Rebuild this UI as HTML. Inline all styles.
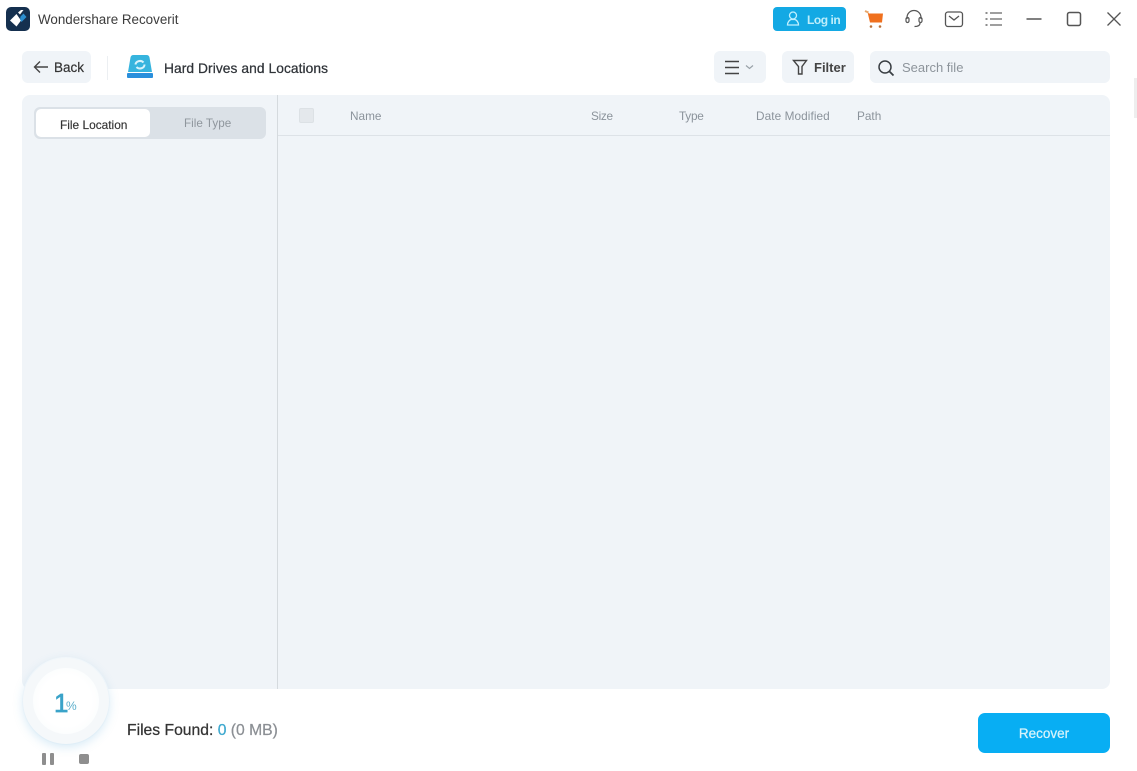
<!DOCTYPE html>
<html><head><meta charset="utf-8">
<style>
html,body{margin:0;padding:0;background:#fff}
#p{position:relative;width:1137px;height:771px;overflow:hidden;background:#fff;font-family:"Liberation Sans",sans-serif;color:#333}
#p div,#p svg{position:absolute}
.t{white-space:nowrap;line-height:16px}
.h{font-size:11.800px;color:#8b939b;top:107.500px}
.b{background:#f0f4f8;border-radius:6px}
</style></head><body><div id="p">
<svg style="left:6px;top:7px" width="24" height="24" viewBox="0 0 24 24"><rect width="24" height="24" rx="5" fill="#15304f"/><path d="M4 13.500L10.500 7l4.500 6.500-4.500 6z" fill="#fff"/><path d="M12 5.500L15 3h2.500l-3.500 4.500z" fill="#fff"/><path d="M14.500 9.500l3-3 3 3.500-5 5-1.500-2.500z" fill="#2c8fd0"/></svg>
<div class="t" style="left:38px;top:12px;font-size:13.400px;color:#3c3c3c">Wondershare Recoverit</div>

<div style="left:773px;top:7px;width:73px;height:24px;background:#13a9e4;border-radius:4px"></div>
<svg style="left:785px;top:10px" width="16" height="16" viewBox="0 0 16 16" fill="none" stroke="#bff0ff" stroke-width="1.300"><circle cx="8" cy="5.500" r="3.500"/><path d="M2.500 15c0-3 2-5 3.500-5.500h4c1.500.5 3.500 2.500 3.500 5.500z"/></svg>
<div class="t" style="left:807px;top:12px;font-size:12px;font-weight:bold;color:#bdeefb;letter-spacing:-.45px">Log in</div>

<svg style="left:864px;top:9px" width="20" height="20" viewBox="0 0 20 20"><path d="M3.500 3L6 13.500h12l1-9H5z" fill="#f0701e"/><path d="M1 2l3.500 1.500" stroke="#e9a66a" stroke-width="2" fill="none"/><circle cx="7" cy="17.500" r="1.300" fill="#b8703a"/><circle cx="16" cy="17.500" r="1.300" fill="#b8703a"/></svg>
<svg style="left:904px;top:9px" width="20" height="20" viewBox="0 0 20 20" fill="none" stroke="#555" stroke-width="1.200"><path d="M3 10V8.500a7 7 0 0 1 14 0V10"/><rect x="2" y="8.500" width="3" height="5" rx="1.500"/><rect x="15" y="8.500" width="3" height="5" rx="1.500"/><path d="M16 14c0 2.500-2.500 3.500-5.500 3.500"/></svg>
<svg style="left:944px;top:9px" width="20" height="20" viewBox="0 0 20 20" fill="none" stroke="#555" stroke-width="1.300"><rect x="1.500" y="3" width="17" height="14.500" rx="2.500"/><path d="M5 7l5 4 5-4"/></svg>
<svg style="left:984px;top:9px" width="20" height="20" viewBox="0 0 20 20" fill="none" stroke="#666" stroke-width="1.200"><path d="M6 4h12M6 10h12M6 16h12"/><path d="M1.500 4h2M1.500 10h2M1.500 16h2" stroke-width="1.600"/></svg>
<svg style="left:1024px;top:9px" width="20" height="20" viewBox="0 0 20 20" fill="none" stroke="#555" stroke-width="1.500"><path d="M2.500 10h15"/></svg>
<svg style="left:1064px;top:9px" width="20" height="20" viewBox="0 0 20 20" fill="none" stroke="#555" stroke-width="1.500"><rect x="3.500" y="3.500" width="13" height="13" rx="2"/></svg>
<svg style="left:1104px;top:9px" width="20" height="20" viewBox="0 0 20 20" fill="none" stroke="#555" stroke-width="1.300"><path d="M3.500 3.500l13 13M16.500 3.500l-13 13"/></svg>

<div class="b" style="left:22px;top:51px;width:69px;height:32px"></div>
<svg style="left:32px;top:59px" width="18" height="16" viewBox="0 0 18 16" fill="none" stroke="#444" stroke-width="1.400"><path d="M16 8H3M8 2.500L2.500 8 8 13.500"/></svg>
<div class="t" style="left:54px;top:60px;font-size:13.500px;color:#333;-webkit-text-stroke:.2px #333">Back</div>
<div style="left:107px;top:56px;width:1px;height:24px;background:#eceff2"></div>
<svg style="left:126px;top:54px" width="28" height="26" viewBox="0 0 28 26"><path d="M4.500 3.500Q5 1 7.500 1h13q2.500 0 3 2.500L26 18H2z" fill="#36b4de"/><path d="M1 20q0-1 1-1h24q1 0 1 1v3q0 1-1 1H2q-1 0-1-1z" fill="#2a8fdc"/><path d="M9.500 10.500a4.500 4 0 0 1 8-2M18.500 10.500a4.500 4 0 0 1-8 2.500" fill="none" stroke="#d8f3fb" stroke-width="2"/></svg>
<div class="t" style="left:164px;top:60.500px;font-size:13.800px;letter-spacing:.06px;color:#2f3338;-webkit-text-stroke:.25px #2f3338">Hard Drives and Locations</div>

<div class="b" style="left:714px;top:51px;width:52px;height:32px"></div>
<svg style="left:724px;top:60px" width="32" height="15" viewBox="0 0 32 15" fill="none" stroke="#444" stroke-width="1.500"><path d="M1 1.500h14M1 7.500h14M1 13.500h14"/><path d="M22 5.500l3.500 3 3.500-3" stroke="#99a1a8" stroke-width="1.200"/></svg>
<div class="b" style="left:782px;top:51px;width:72px;height:32px"></div>
<svg style="left:792px;top:59px" width="16" height="16" viewBox="0 0 16 16" fill="none" stroke="#444" stroke-width="1.400"><path d="M1.500 1.500h13L10 7.500V15H6.500V7.500z"/></svg>
<div class="t" style="left:814px;top:60px;font-size:13px;font-weight:bold;color:#444">Filter</div>
<div class="b" style="left:870px;top:51px;width:240px;height:32px"></div>
<svg style="left:877px;top:59px" width="18" height="18" viewBox="0 0 18 18" fill="none" stroke="#3a3f44" stroke-width="1.500"><circle cx="8" cy="8" r="6"/><path d="M12.500 12.500l4 4" stroke-width="1.800"/></svg>
<div class="t" style="left:902px;top:60px;font-size:13px;color:#8d949b">Search file</div>

<div class="b" style="left:22px;top:95px;width:1088px;height:594px;border-radius:8px"></div>
<div style="left:277px;top:95px;width:1px;height:594px;background:#d5dade"></div>
<div style="left:278px;top:135px;width:832px;height:1px;background:#dde2e7"></div>

<div style="left:34px;top:107px;width:232px;height:32px;background:#dbe1e7;border-radius:6px"></div>
<div style="left:36px;top:109px;width:114px;height:28px;background:#fff;border-radius:5px"></div>
<div class="t" style="left:60px;top:116.500px;font-size:11.900px;color:#333;-webkit-text-stroke:.15px #333">File Location</div>
<div class="t" style="left:184px;top:115.500px;font-size:11.700px;color:#8f969d">File Type</div>

<div style="left:299px;top:108px;width:13px;height:13px;background:#e4e8ec;border:1px solid #dce1e5;border-radius:2px"></div>
<div class="t h" style="left:350px">Name</div>
<div class="t h" style="left:591px;letter-spacing:-.3px">Size</div>
<div class="t h" style="left:679px;letter-spacing:-.25px">Type</div>
<div class="t h" style="left:756px;letter-spacing:.08px">Date Modified</div>
<div class="t h" style="left:857px">Path</div>

<div style="left:1134px;top:78px;width:3px;height:40px;background:#eeeeee"></div>

<div style="left:23px;top:658px;width:86px;height:86px;border-radius:50%;background:#f5f8fa;box-shadow:0 3px 10px rgba(90,170,220,.25),0 0 0 1px #fbfcfd"></div>
<div style="left:33px;top:668px;width:66px;height:66px;border-radius:50%;background:radial-gradient(circle,#fff 55%,#f6fafc 100%)"></div>
<div class="t" style="left:54px;top:689px;font-size:26px;line-height:28px;color:#3aa3c9;-webkit-text-stroke:.7px #3aa3c9">1</div>
<div class="t" style="left:66px;top:698px;font-size:12px;color:#5aaecb">%</div>
<div style="left:42px;top:753px;width:4px;height:12px;background:#8e8e8e;border-radius:1px"></div>
<div style="left:50px;top:753px;width:4px;height:12px;background:#8e8e8e;border-radius:1px"></div>
<div style="left:79px;top:754px;width:10px;height:10px;background:#8e8e8e;border-radius:2px"></div>

<div class="t" style="left:127px;top:722.500px;font-size:15.700px;color:#333;-webkit-text-stroke:.25px #333">Files Found: <span style="color:#3fa9cf;-webkit-text-stroke:.25px #3fa9cf">0</span> <span style="color:#8b8f94;-webkit-text-stroke:.25px #8b8f94">(0 MB)</span></div>

<div style="left:978px;top:713px;width:132px;height:40px;background:#08aef3;border-radius:7px"></div>
<div class="t" style="left:978px;width:132px;text-align:center;top:726px;font-size:13.500px;color:#d5f3fb;-webkit-text-stroke:.25px #d5f3fb">Recover</div>
</div></body></html>
